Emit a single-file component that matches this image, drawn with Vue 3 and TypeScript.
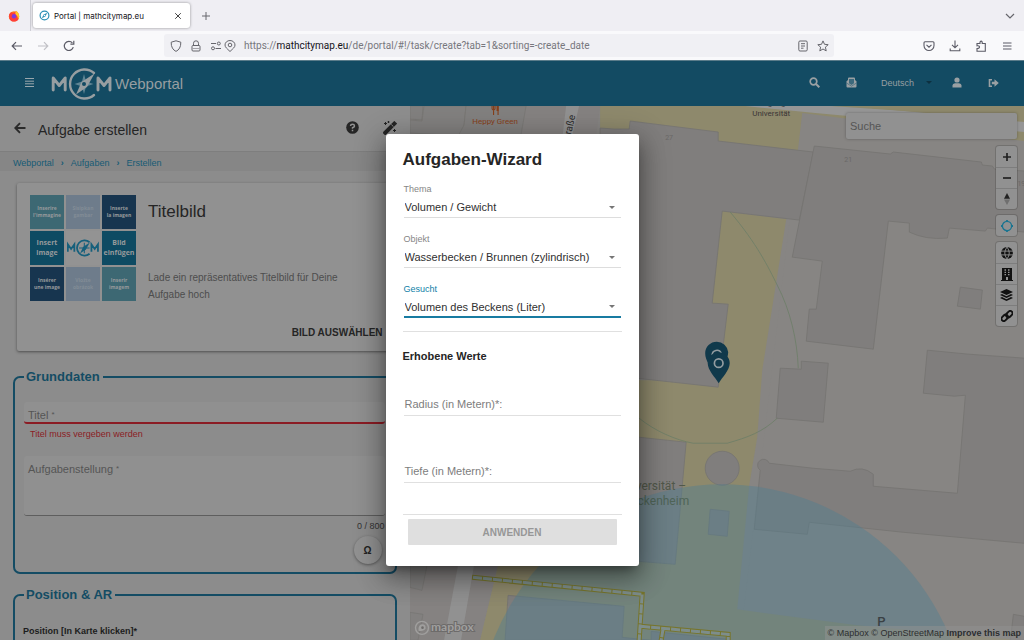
<script setup lang="ts">
import { ref } from 'vue'

interface WizardSelect {
  id: string
  label: string
  value: string
  active: boolean
}

const selects = ref<WizardSelect[]>([
  { id: 'thema', label: 'Thema', value: 'Volumen / Gewicht', active: false },
  { id: 'objekt', label: 'Objekt', value: 'Wasserbecken / Brunnen (zylindrisch)', active: false },
  { id: 'gesucht', label: 'Gesucht', value: 'Volumen des Beckens (Liter)', active: true },
])

const measures = [
  { id: 'radius', label: 'Radius (in Metern)*:' },
  { id: 'tiefe', label: 'Tiefe (in Metern)*:' },
]

const tiles = [
  { tone: 'sea', lines: ['Inserire', "l'immagine"] },
  { tone: 'pale', lines: ['Sisipkan', 'gambar'] },
  { tone: 'navy', lines: ['Inserte', 'la imagen'] },
  { tone: 'teal', lines: ['Insert', 'image'] },
  { tone: 'logo', lines: [] },
  { tone: 'teal', lines: ['Bild', 'einfügen'] },
  { tone: 'navy', lines: ['Insérer', 'une image'] },
  { tone: 'pale', lines: ['Vložte', 'obrázok'] },
  { tone: 'sea', lines: ['Inserir', 'imagem'] },
]

const crumbs = ['Webportal', 'Aufgaben', 'Erstellen']
const title = ref('')
const taskText = ref('')
const search = ref('')
</script>

<template>
  <div class="window">
    <div class="tabbar">
      <div class="ff">
        <svg viewBox="0 0 12 12" width="12" height="12" aria-hidden="true">
          <circle cx="6" cy="6.4" r="5.2" fill="#ff7a1a" />
          <path d="M1 5C2 3 3 2 4 2.4C5 3 7 3 8 1C11 3 12 7 10 10C7 12.500 3 12 1.500 9Z" fill="#ff3d3a" />
          <path d="M8 .8C11.500 3 12 7 10 9.500C10 7 9 5 7.500 4.500C7 3 7.500 2 8 .8Z" fill="#ffc928" />
          <circle cx="6" cy="6.200" r="2.200" fill="#7a3be0" />
        </svg>
      </div>
      <div class="tab">
        <svg viewBox="0 0 12 12" width="11" height="11" aria-hidden="true">
          <circle cx="6" cy="6" r="4.800" fill="none" stroke="#2a8fb5" stroke-width="1.300" />
          <path d="M9 3L7 7L3 9L5 5Z" fill="#2a8fb5" />
          <circle cx="6" cy="6" r=".9" fill="#fff" />
        </svg>
        <span class="tab-title">Portal | mathcitymap.eu</span>
        <button class="plain" aria-label="Tab schließen">
          <svg viewBox="0 0 8 8" width="8" height="8"><path d="M1.200 1.200L6.800 6.800M6.800 1.200L1.200 6.800" stroke="#444" stroke-width="1" /></svg>
        </button>
      </div>
      <button class="plain newtab" aria-label="Neuer Tab">
        <svg viewBox="0 0 10 10" width="10" height="10"><path d="M5 1V9M1 5H9" stroke="#66666c" stroke-width="1" /></svg>
      </button>
      <button class="plain tablist" aria-label="Tabs auflisten">
        <svg viewBox="0 0 10 6" width="10" height="6"><path d="M1 1L5 5L9 1" fill="none" stroke="#66666c" stroke-width="1.200" /></svg>
      </button>
    </div>

    <div class="toolbar">
      <div class="nav">
        <button class="plain" aria-label="Zurück">
          <svg viewBox="0 0 12 10" width="12" height="10"><path d="M11 5H1.500M5 1.200L1.200 5L5 8.800" fill="none" stroke="#5b5b66" stroke-width="1.200" /></svg>
        </button>
        <button class="plain faded" aria-label="Vor">
          <svg viewBox="0 0 12 10" width="12" height="10"><path d="M1 5H10.500M7 1.200L10.800 5L7 8.800" fill="none" stroke="#5b5b66" stroke-width="1.200" /></svg>
        </button>
        <button class="plain" aria-label="Neu laden">
          <svg viewBox="0 0 12 12" width="12" height="12"><path d="M10.300 7.200A4.600 4.600 0 1 1 9.400 2.900M10.800 .8V4.200H7.400" fill="none" stroke="#5b5b66" stroke-width="1.200" /></svg>
        </button>
      </div>
      <div class="urlbar">
        <svg viewBox="0 0 12 12" width="12" height="12" aria-hidden="true"><path d="M6 .8L10.800 2.200C11 7 9 10 6 11.400C3 10 1 7 1.200 2.200Z" fill="none" stroke="#66666c" stroke-width="1" stroke-linejoin="round" /></svg>
        <svg viewBox="0 0 12 12" width="12" height="12" aria-hidden="true"><rect x="2" y="5.500" width="8" height="5.500" rx="1" fill="none" stroke="#66666c" /><path d="M3.500 5.500V3.300A2.500 2.500 0 0 1 8.500 3.300V5.500" fill="none" stroke="#66666c" /><path d="M2 8.500H10" stroke="#a5a5aa" /></svg>
        <svg viewBox="0 0 12 12" width="12" height="12" aria-hidden="true"><path d="M1 3.500H6M5.500 8.500H11" stroke="#66666c" stroke-width="1.200" /><circle cx="8.800" cy="3.500" r="1.500" fill="none" stroke="#66666c" /><circle cx="3" cy="8.300" r="1.500" fill="none" stroke="#66666c" /></svg>
        <svg class="near" viewBox="0 0 12 12" width="12" height="12" aria-hidden="true"><path d="M6 11.500C3 8.500 1 7.300 1 5A5 4.500 0 0 1 11 5C11 7.300 9 8.500 6 11.500Z" fill="none" stroke="#66666c" /><circle cx="6" cy="5" r="1.800" fill="none" stroke="#66666c" /></svg>
        <span class="url">https://<b>mathcitymap.eu</b>/de/portal/#!/task/create?tab=1&amp;sorting=-create_date</span>
        <svg viewBox="0 0 12 12" width="12" height="12" aria-hidden="true"><rect x="1.800" y="1" width="8.400" height="10" rx="1.200" fill="none" stroke="#66666c" /><path d="M4 3.700H8M4 6H8M4 8.200H6.500" stroke="#66666c" /></svg>
        <svg viewBox="0 0 12 12" width="12" height="12" aria-hidden="true"><path d="M6 .9L7.500 4.300L11.200 4.700L8.400 7.100L9.200 10.900L6 9L2.800 10.900L3.600 7.100L.8 4.700L4.500 4.300Z" fill="none" stroke="#66666c" stroke-linejoin="round" /></svg>
      </div>
      <div class="tools">
        <svg viewBox="0 0 12 12" width="12" height="12" aria-hidden="true"><path d="M2 1.800H10Q11 1.800 11 2.800V5.500A5 5 0 0 1 1 5.500V2.800Q1 1.800 2 1.800ZM3.500 4.800L6 7.200L8.500 4.800" fill="none" stroke="#5b5b66" stroke-width="1.100" /></svg>
        <svg viewBox="0 0 12 12" width="12" height="12" aria-hidden="true"><path d="M6 .5V7.500M3 4.800L6 7.800L9 4.800M1.200 8.500V10.800H10.800V8.500" fill="none" stroke="#5b5b66" stroke-width="1.100" /></svg>
        <svg viewBox="0 0 12 12" width="12" height="12" aria-hidden="true"><path d="M2 11.200V8.500Q4.500 8.500 4.500 7T2 5.800V3.500H5V2Q6.200 .3 7.200 2V3.500H10.300V11.200Z" fill="none" stroke="#5b5b66" stroke-width="1.100" /></svg>
        <svg viewBox="0 0 12 12" width="12" height="12" aria-hidden="true"><path d="M2 3H10.500M2 6H10.500M2 9H10.500" stroke="#5b5b66" stroke-width="1.100" /></svg>
      </div>
    </div>

    <div class="page">
      <header class="appbar">
        <button class="plain burger" aria-label="Menü">
          <svg viewBox="0 0 9 9" width="9" height="9"><path d="M0 .5H9M0 3.200H9M0 5.800H9M0 8.500H9" stroke="#9aa7ad" stroke-width="1" /></svg>
        </button>
        <svg class="mark" viewBox="0 0 61 34" width="61" height="34" role="img" aria-label="MCM">
          <g fill="none" stroke="#979ea1" stroke-width="2.900" stroke-linejoin="round" stroke-linecap="round">
            <path d="M2.200 23V11L8.200 18.500L14.200 11V23M47 23V11L53 18.500L59 11V23" />
            <path d="M43 6A14.500 14.500 0 1 0 43 28" stroke-width="2.400" />
          </g>
          <path d="M33 7L35 14.500L42.500 17L35 19.500L33 27L31 19.500L23.500 17L31 14.500Z" fill="#5f8594" />
          <path d="M43.500 6.500L36 20L25 27.500L30.500 15Z" fill="#979ea1" />
          <circle cx="33" cy="17" r="2" fill="#134b63" />
        </svg>
        <span class="brand">Webportal</span>
        <nav class="actions">
          <button class="plain" aria-label="Suche öffnen"><svg viewBox="0 0 11 11" width="11" height="11"><circle cx="4.500" cy="4.500" r="3.300" fill="none" stroke="#9aa0a3" stroke-width="1.700" /><path d="M7 7L10.300 10.300" stroke="#9aa0a3" stroke-width="2" /></svg></button>
          <button class="plain" aria-label="Nachrichten"><svg viewBox="0 0 11 11" width="11" height="11"><path d="M.5 4.200L2 3V1.500Q2 .5 3 .5H8Q9 .5 9 1.500V3L10.500 4.200V9.500Q10.500 10.500 9.500 10.500H1.500Q.5 10.500 .5 9.500Z" fill="#9aa0a3" /><path d="M3 2H8V6.300L5.500 8L3 6.300Z" fill="#3d697c" /><path d="M.5 6L5.500 9.200L10.500 6" fill="none" stroke="#3d697c" stroke-width=".7" /></svg></button>
          <button class="plain lang">Deutsch <svg viewBox="0 0 6 3" width="6" height="3"><path d="M0 0H6L3 3Z" fill="#0d3040" /></svg></button>
          <button class="plain" aria-label="Profil"><svg viewBox="0 0 10 11" width="10" height="11"><circle cx="5" cy="3" r="2.600" fill="#9aa0a3" /><path d="M.5 10.500V8.500Q.5 6.500 3 6.300H7Q9.500 6.500 9.500 8.500V10.500Z" fill="#9aa0a3" /></svg></button>
          <button class="plain" aria-label="Abmelden"><svg viewBox="0 0 11 10" width="11" height="10"><path d="M4 1.700H1.500V8.300H4" fill="none" stroke="#9aa0a3" stroke-width="1.600" /><path d="M3.800 3.800H6.500V1.200L10.800 5L6.500 8.800V6.200H3.800Z" fill="#9aa0a3" /></svg></button>
        </nav>
      </header>

      <main class="content">
        <section class="panel">
          <div class="titlebar">
            <button class="plain" aria-label="Zurück zur Liste"><svg viewBox="0 0 12 12" width="12" height="12"><path d="M11.500 6H1.500M6 1.200L1.300 6L6 10.800" fill="none" stroke="#2a2a2a" stroke-width="1.900" /></svg></button>
            <h1>Aufgabe erstellen</h1>
            <button class="plain help" aria-label="Hilfe"><svg viewBox="0 0 13 13" width="13" height="13"><circle cx="6.500" cy="6.500" r="6.300" fill="#252525" /><path d="M4.500 5Q4.600 3.300 6.500 3.300T8.500 5Q8.500 6 6.500 6.800V7.700M6.500 8.700V10.200" fill="none" stroke="#929292" stroke-width="1.500" /></svg></button>
            <button class="plain" aria-label="Wizard"><svg viewBox="0 0 14 14" width="14" height="14"><path d="M2.300 11.700L11.300 2.700" stroke="#252525" stroke-width="4" stroke-linecap="square" /><path d="M8.300 3.500L10.500 5.700" stroke="#929292" stroke-width=".9" /><path d="M2.500 1V4M1 2.500H4M5.500 0V2M4.500 1H6.500M11.500 8V11M10 9.500H13" stroke="#252525" stroke-width="1" /></svg></button>
          </div>
          <nav class="crumbs" aria-label="Brotkrumen">
            <template v-for="(c, i) in crumbs" :key="c">
              <span v-if="i > 0" class="sep">›</span><a href="#">{{ c }}</a>
            </template>
          </nav>

          <div class="scroll">
            <article class="card">
              <div class="tiles">
                <div v-for="(t, i) in tiles" :key="i" class="tile" :class="[t.tone, { big: t.tone === 'teal' }]">
                  <svg v-if="t.tone === 'logo'" viewBox="0 0 61 34" width="32" height="18" role="img" aria-label="MCM">
                    <path d="M1.600 24V10L7.800 19L14 10V24M46.600 24V10L52.800 19L59 10V24M43 6A14.500 14.500 0 1 0 43 28" fill="none" stroke="#16607c" stroke-width="3.400" />
                    <path d="M43.500 6.500L36 20L25 27.500L30.500 15Z" fill="#16607c" />
                    <path d="M33 7V27M23 17H43" stroke="#16607c" stroke-width="2" />
                  </svg>
                  <span v-for="l in t.lines" :key="l">{{ l }}</span>
                </div>
              </div>
              <div class="card-text">
                <h2>Titelbild</h2>
                <p>Lade ein repräsentatives Titelbild für Deine Aufgabe hoch</p>
              </div>
              <button class="plain pick">BILD AUSWÄHLEN</button>
            </article>

            <fieldset class="group">
              <legend>Grunddaten</legend>
              <div class="field invalid">
                <label for="titel">Titel <sup>*</sup></label>
                <input id="titel" v-model="title" type="text" />
              </div>
              <p class="error">Titel muss vergeben werden</p>
              <div class="field area">
                <label for="aufgabe">Aufgabenstellung <sup>*</sup></label>
                <textarea id="aufgabe" v-model="taskText"></textarea>
              </div>
              <p class="count">{{ taskText.length }} / 800</p>
              <button class="omega" aria-label="Sonderzeichen">Ω</button>
            </fieldset>

            <fieldset class="group">
              <legend>Position &amp; AR</legend>
              <p class="pos">Position [In Karte klicken]*</p>
            </fieldset>
          </div>
        </section>

        <section class="map">
          <svg class="canvas" viewBox="410 106 614 534" preserveAspectRatio="xMinYMin slice" aria-hidden="true">
            <rect x="410" y="106" width="1400" height="900" fill="#878583" />
            <path d="M410 106H600L560 400L498 565L480 640H410Z" fill="#858281" />
            <g fill="#82807f" stroke="#777573" stroke-width=".7">
              <path d="M410 106H423L422 120L410 119Z" />
              <path d="M424 106H466L463 136L410 133V120L422 121Z" />
              <path d="M466 106H526L520 140H456L464 125Z" />
              <path d="M410 560H428L422 590L410 587Z" />
              <path d="M410 612L423 614L418 640H410Z" />
            </g>
            <path d="M566 106H579L571 140H562ZM458 565H474L461 640H444Z" fill="#919191" />
            <path d="M600 106H1024V142L802 114L799 152L718 142L600 140Z" fill="#8e896c" />
            <path d="M802 113L1024 141V640H740Z" fill="#878583" />
            <path d="M745 106H850L1024 122V132L815 113Z" fill="#969696" />
            <path d="M830 106H1024V121L920 112Z" fill="#8e896c" />
            <path d="M722 211L786 219L762 370L757 437L749 485L737 609L857 625L1024 640H480L498 565L600 380L700 380Z" fill="#8e896c" />
            <g fill="#807e7d" stroke="#757371" stroke-width=".8">
              <path d="M600 128L614 129L629 129L630 121L718 132L718 141L813 152L799 220L722 211L712 303L728 304L718 387L600 374Z" />
              <path d="M814 146L890 154L893 152L981 162L982 165L992 166L994 169L1024 171V232L987 228L985 231L949 228L947 238Q925 240 909 232L909 223L888 221L873 349L806 341L809 309L816 309L822 261L792 257Z" />
              <path d="M960 287L982 290L980 309L957 306Z" />
              <path d="M780 368L801 369V361L828 363L823 422L776 418Z" />
              <path d="M927 350L968 354L1024 358V543L969 538L903 532L809 522L807 534L754 529L760 470A6 6 0 1 1 769 463L813 468L850 471Q862 465 873 474L873 486L957 493L965 395L954 396L923 393Z" />
              <circle cx="722" cy="468" r="17" />
              <path d="M710 509L729 511L727 536L708 534Z" />
              <path d="M600 434L639 437L686 442L675 564L600 558Z" />
              <path d="M508 595L624 606L622 637L651 640H505Z" />
              <path d="M651 631L728 639V650H651ZM1013 614L1024 616V640H1010Z" />
            </g>
            <path d="M730 212C757 244 768 267 777 285C790 310 797 340 798 368M777 418C762 432 748 437 727 443H693C676 440 655 431 639 418" fill="none" stroke="#6c7d67" stroke-width=".8" />
            <circle cx="722" cy="730" r="246" fill="#527e90" fill-opacity=".45" />
            <g fill="none">
              <path d="M472 577L642 594L639 640M641 626L728 634V640M663 628L661 640" stroke="#77752c" stroke-width="5" />
              <path d="M473 577L642 594L639 640M641 626L728 634V640M663 628L661 640" stroke="#7d8d8b" stroke-width="3" stroke-dasharray="9 1" />
            </g>
            <path d="M716.500 341.500A11.500 11.500 0 0 1 728 352C728 360 720 369 717 374C710 367 705 360 705 353A11.500 11.500 0 0 1 716.500 341.500Z" fill="#10394b" />
            <path d="M712 355A4.700 4.700 0 0 1 721 353" fill="none" stroke="#929ca0" stroke-width="1.600" />
            <path d="M718.500 352A11 11 0 0 1 729.500 363C729.500 370 722 377 718.500 383C715 377 707.500 370 707.500 363A11 11 0 0 1 718.500 352Z" fill="#10394b" />
            <circle cx="718.500" cy="363" r="4.300" fill="none" stroke="#929ca0" stroke-width="1.700" />
            <path d="M492 106V108.500Q492 110 493.500 110T495 108.500V106M493.500 106V115M498 115V106" fill="none" stroke="#863f1a" stroke-width="1.100" />
            <path d="M496.500 106H498.500V111H496.500Z" fill="#863f1a" />
            <g class="map-text">
              <text x="495" y="124" fill="#863f1a" text-anchor="middle">Heppy Green</text>
              <text x="771" y="106" fill="#393536" text-anchor="middle">Eingang</text>
              <text x="771" y="116" fill="#393536" text-anchor="middle">Universität</text>
              <text transform="translate(571 135) rotate(-78)" fill="#2b2b2b" class="street">raße</text>
              <text x="686" y="490" text-anchor="end" fill="#51584a" class="place">Universität –</text>
              <text x="689" y="505" text-anchor="end" fill="#4f6457" class="place">Bockenheim</text>
              <text x="665" y="140" fill="#6a6867" class="num">27</text>
              <text x="844" y="162" fill="#6a6867" class="num">21</text>
              <text x="1017" y="186" fill="#6a6867" class="num">19</text>
              <text x="877" y="626" fill="#3a4144" class="parking">P</text>
            </g>
            <circle cx="422" cy="627.500" r="6.500" fill="none" stroke="#a09f9e" stroke-width="1.400" />
            <path d="M418.500 630.500Q418 624.500 422 624Q426 624 425.500 628Q424 631.500 418.500 630.500Z" fill="#a09f9e" />
            <circle cx="422.500" cy="627.300" r="1.300" fill="#6d6b6a" />
            <text x="431" y="631" class="mapbox">mapbox</text>
          </svg>

          <div class="map-ui">
            <input v-model="search" class="search" type="text" placeholder="Suche" aria-label="Suche" />
            <div class="ctrl">
              <button aria-label="Vergrößern"><svg viewBox="0 0 10 10" width="10" height="10"><path d="M5 1V9M1 5H9" stroke="#222" stroke-width="1.700" /></svg></button>
              <button aria-label="Verkleinern"><svg viewBox="0 0 10 10" width="10" height="10"><path d="M1 5H9" stroke="#222" stroke-width="1.700" /></svg></button>
              <button aria-label="Nach Norden"><svg viewBox="0 0 10 12" width="10" height="12"><path d="M2 5.700L5 0L8 5.700Z" fill="#222" /><path d="M2 6.500L5 12L8 6.500Z" fill="#6f6f6f" /></svg></button>
            </div>
            <div class="ctrl">
              <button aria-label="Standort"><svg viewBox="0 0 14 14" width="14" height="14"><circle cx="7" cy="7" r="4.600" fill="none" stroke="#1a7490" stroke-width="1.300" /><path d="M7 1V3M7 11V13M1 7H3M11 7H13" stroke="#1a7490" stroke-width="1.800" /></svg></button>
            </div>
            <div class="ctrl">
              <button aria-label="Satellit"><svg viewBox="0 0 12 12" width="12" height="12"><circle cx="6" cy="6" r="5.900" fill="#111" /><path d="M0 4.100H12M0 7.900H12M6 0Q1.500 6 6 12Q10.500 6 6 0" fill="none" stroke="#929292" stroke-width=".9" /></svg></button>
              <button aria-label="Gebäude"><svg viewBox="0 0 12 13" width="12" height="13"><path d="M1 0H11V12H12V13H0V12H1Z" fill="#111" /><path d="M3.500 2H5M7 2H8.500M3.500 4.300H5M7 4.300H8.500M3.500 6.600H5M7 6.600H8.500" stroke="#929292" stroke-width="1.300" /><path d="M5 9H7V12H5Z" fill="#929292" /></svg></button>
              <button aria-label="Ebenen"><svg viewBox="0 0 13 12" width="13" height="12"><path d="M6.500 0L13 3L6.500 6L0 3ZM0 6L2 5L6.500 7.200L11 5L13 6L6.500 9ZM0 9L2 8L6.500 10.200L11 8L13 9L6.500 12Z" fill="#111" /></svg></button>
              <button aria-label="Verknüpfung"><svg viewBox="0 0 12 12" width="12" height="12"><g fill="none" stroke="#111" stroke-width="1.900"><rect x="4.700" y="1.900" width="7.200" height="4.600" rx="2.300" transform="rotate(-45 8.300 4.200)" /><rect x=".1" y="5.500" width="7.200" height="4.600" rx="2.300" transform="rotate(-45 3.700 7.800)" /></g></svg></button>
            </div>
          </div>
          <footer class="attrib"><a href="#">© Mapbox</a> <a href="#">© OpenStreetMap</a> <a href="#" class="strong">Improve this map</a></footer>
        </section>
      </main>

      <div class="backdrop">
        <form class="dialog" role="dialog" aria-modal="true" aria-labelledby="wizard-title" @submit.prevent>
          <h2 id="wizard-title">Aufgaben-Wizard</h2>
          <div v-for="s in selects" :key="s.id" class="choice" :class="{ active: s.active }">
            <label :for="s.id">{{ s.label }}</label>
            <div class="select-box">
              <select :id="s.id" v-model="s.value"><option>{{ s.value }}</option></select>
              <svg viewBox="0 0 6 3" width="6" height="3" aria-hidden="true"><path d="M0 0H6L3 3Z" fill="#757575" /></svg>
            </div>
          </div>
          <hr />
          <h3>Erhobene Werte</h3>
          <div v-for="m in measures" :key="m.id" class="measure">
            <label :for="m.id">{{ m.label }}</label>
            <input :id="m.id" type="text" />
          </div>
          <hr class="end" />
          <button class="apply" type="submit" disabled>ANWENDEN</button>
        </form>
      </div>
    </div>
  </div>
</template>

<style>
body {
  margin: 0;
  overflow: hidden;
}
</style>

<style scoped>
* {
  box-sizing: border-box;
}
.window {
  height: 100vh;
  display: flex;
  flex-direction: column;
  font-family: "Liberation Sans", Arial, sans-serif;
  font-size: 11px;
  color: #252525;
}
h1, h2, h3, p {
  margin: 0;
}
svg {
  display: block;
  flex: none;
}
button, input, select, textarea {
  font-family: inherit;
  margin: 0;
}
.plain {
  border: 0;
  padding: 0;
  background: none;
  color: inherit;
}
a {
  text-decoration: none;
  color: inherit;
}

/* browser chrome */
.tabbar {
  height: 31px;
  flex: none;
  display: flex;
  align-items: center;
  background: #efeef3;
  font-family: Inter, Roboto, sans-serif;
}
.ff {
  width: 31px;
  height: 31px;
  padding-left: 8px;
  display: flex;
  align-items: center;
  border-right: 1px solid #cfcfd6;
}
.tab {
  width: 157px;
  height: 25px;
  margin-left: 2px;
  padding: 0 8px 0 6px;
  display: flex;
  align-items: center;
  gap: 4px;
  background: #fff;
  border-radius: 3px;
  box-shadow: 0 0 3px rgba(0, 0, 0, 0.4);
  font-size: 8px;
  color: #15141a;
}
.tab-title {
  flex: 1;
  white-space: nowrap;
}
.newtab {
  margin-left: 11px;
}
.tablist {
  margin-left: auto;
  margin-right: 9px;
}
.toolbar {
  height: 29px;
  flex: none;
  display: flex;
  align-items: center;
  background: #f9f9fb;
}
.nav {
  width: 164px;
  flex: none;
  padding-left: 11px;
  display: flex;
  align-items: center;
  gap: 14px;
}
.faded {
  opacity: 0.35;
}
.urlbar {
  flex: 1;
  height: 23px;
  padding: 0 5px 0 6px;
  display: flex;
  align-items: center;
  gap: 8px;
  background: #f0f0f4;
  border-radius: 3px;
  font-family: Roboto, sans-serif;
  font-size: 10px;
  color: #77777d;
}
.near {
  margin-left: -6px;
}
.url {
  flex: 1;
  white-space: nowrap;
}
.url b {
  font-weight: 400;
  color: #15141a;
}
.tools {
  width: 190px;
  flex: none;
  padding-right: 11px;
  display: flex;
  justify-content: flex-end;
  gap: 14px;
}

/* application */
.page {
  position: relative;
  flex: 1;
  min-height: 0;
  display: flex;
  flex-direction: column;
}
.appbar {
  height: 46px;
  flex: none;
  display: flex;
  align-items: center;
  background: #134b63;
  border-top: 1px solid #5b7c8a;
  color: #979ea1;
}
.burger {
  margin-left: 25px;
  padding-bottom: 2px;
}
.mark {
  margin-left: 17px;
}
.brand {
  margin-left: 3px;
  font-size: 15px;
}
.actions {
  margin-left: auto;
  margin-right: 25px;
  padding-bottom: 2px;
  display: flex;
  align-items: center;
  gap: 26px;
}
.actions .lang {
  display: flex;
  align-items: center;
  gap: 12px;
  margin-right: -6px;
  margin-left: -2px;
  font-size: 9px;
}
.content {
  flex: 1;
  min-height: 0;
  display: grid;
  grid-template-columns: 2fr 3fr;
}
.panel {
  min-width: 0;
  overflow: hidden;
  background: #8c8c8c;
}
.titlebar {
  height: 46px;
  padding: 0 13px 2px 14px;
  display: flex;
  align-items: center;
  background: #8e8e8e;
  border-bottom: 1px solid #7e7e7e;
}
.titlebar h1 {
  flex: 1;
  margin-left: 12px;
  padding-top: 4px;
  font-size: 14px;
  font-weight: 400;
}
.help {
  margin-right: 24px;
}
.crumbs {
  height: 19px;
  padding: 2px 13px 0 13px;
  display: flex;
  align-items: center;
  gap: 7px;
  background: #868686;
  font-size: 9px;
  color: #165b75;
}
.sep {
  font-weight: 700;
}
.scroll {
  padding: 12px 13px 0;
  display: flex;
  flex-direction: column;
}
.card {
  height: 168px;
  margin: 0 0 18px 4px;
  padding: 12px 14px 13px 13px;
  display: grid;
  grid-template-columns: 106px 1fr;
  grid-template-rows: 106px 1fr;
  column-gap: 12px;
  background: #919191;
  border-radius: 2px;
  box-shadow: 0 1px 3px rgba(0, 0, 0, 0.45);
}
.tiles {
  display: grid;
  grid-template-columns: repeat(3, 1fr);
  grid-template-rows: repeat(3, 1fr);
  gap: 2px;
}
.tile {
  display: flex;
  flex-direction: column;
  align-items: center;
  justify-content: center;
  font-family: "Open Sans", "Noto Sans", sans-serif;
  font-weight: 700;
  font-size: 5px;
  line-height: 7px;
  color: #979a9c;
  white-space: nowrap;
}
.big {
  font-size: 7px;
  line-height: 10px;
}
.sea {
  background: #3d6873;
}
.pale {
  background: #6e7c8b;
  color: #828c96;
}
.navy {
  background: #17354f;
}
.teal {
  background: #0e4b63;
}
.logo {
  background: #939393;
}
.card-text h2 {
  padding-top: 7px;
  font-size: 17px;
  line-height: 20px;
  font-weight: 400;
}
.card-text p {
  max-width: 220px;
  margin-top: 47px;
  font-size: 10px;
  line-height: 17px;
  color: #4d4d4d;
}
.pick {
  grid-column: 1 / -1;
  justify-self: end;
  align-self: end;
  font-size: 10px;
  font-weight: 700;
}
.group {
  min-width: 0;
  margin: 0 0 13px;
  padding: 17px 10px 8px 9px;
  border: 2px solid #144c64;
  border-radius: 7px;
}
.group legend {
  padding: 0 3px 0 2px;
  font-size: 13px;
  line-height: 16px;
  font-weight: 700;
  color: #144c64;
}
.field {
  display: grid;
}
.field label {
  grid-area: 1 / 1;
  z-index: 1;
  padding: 6px 4px 0;
  line-height: 14px;
  color: #555;
}
.field sup {
  font-size: 8px;
  line-height: 8px;
  vertical-align: 2px;
}
.field input, .field textarea {
  grid-area: 1 / 1;
  width: 100%;
  height: 22px;
  padding: 5px 4px;
  resize: none;
  border: 0;
  border-bottom: 2px solid #8b1c24;
  border-radius: 3px;
  outline: 0;
  background: #909090;
  font-size: 11px;
}
.field textarea {
  height: 60px;
  border-bottom: 1px solid #5e5e5e;
}
.error {
  padding: 3px 6px 0;
  font-size: 9px;
  line-height: 14px;
  color: #8b1c24;
}
.area {
  margin-top: 15px;
}
.count {
  margin-top: 4px;
  text-align: right;
  font-size: 9px;
  line-height: 12px;
  color: #333;
}
.omega {
  display: block;
  width: 28px;
  height: 28px;
  margin: 4px 3px 0 auto;
  padding: 0;
  border: 0;
  border-radius: 50%;
  background: #919191;
  box-shadow: 0 1px 3px rgba(0, 0, 0, 0.4);
  font-size: 10px;
  font-weight: 700;
  color: #222;
}
.pos {
  margin: 4px 0 0 -1px;
  font-size: 9px;
  line-height: 14px;
  font-weight: 700;
  color: #1d1d1d;
}

/* map */
.map {
  position: relative;
  min-width: 0;
  overflow: hidden;
  background: #878583;
}
.canvas {
  position: absolute;
  inset: 0;
  width: 100%;
  height: 100%;
}
.map-text {
  font-family: Roboto, sans-serif;
  font-size: 8px;
}
.street {
  font-size: 10px;
}
.place {
  font-size: 12px;
}
.num {
  font-size: 7px;
}
.parking {
  font-size: 13px;
  font-weight: 500;
}
.mapbox {
  font-family: Lato, sans-serif;
  font-size: 12px;
  font-weight: 700;
  fill: #a09f9e;
  stroke: #6d6b6a;
  stroke-width: 2px;
  paint-order: stroke;
}
.map-ui {
  position: absolute;
  top: 7px;
  right: 7px;
  display: flex;
  flex-direction: column;
  align-items: flex-end;
  gap: 6px;
}
.search {
  width: 171px;
  height: 26px;
  margin-bottom: 1px;
  padding: 0 4px;
  border: 0;
  border-radius: 2px;
  background: #919191;
  box-shadow: 0 0 3px rgba(0, 0, 0, 0.3);
  font-size: 11px;
}
.search::placeholder {
  color: #555;
  opacity: 1;
}
.ctrl {
  width: 21px;
  border-radius: 3px;
  background: #919191;
  box-shadow: 0 0 0 1px rgba(0, 0, 0, 0.15);
}
.ctrl button {
  width: 21px;
  height: 21px;
  padding: 0;
  display: grid;
  place-items: center;
  border: 0;
  background: none;
}
.ctrl button + button {
  border-top: 1px solid #7d7d7d;
}
.attrib {
  position: absolute;
  right: 0;
  bottom: 0;
  padding: 0 3px;
  background: rgba(145, 145, 145, 0.5);
  font-size: 9px;
  line-height: 14px;
  color: #2d2f30;
  white-space: nowrap;
}
.strong {
  font-weight: 700;
}

/* dialog */
.backdrop {
  position: absolute;
  inset: 0;
  display: flex;
  align-items: center;
  justify-content: center;
}
.dialog {
  width: 253px;
  padding: 16px 17px 21px;
  display: flex;
  flex-direction: column;
  background: #fff;
  border-radius: 3px;
  box-shadow: 0 7px 10px -5px rgba(0, 0, 0, 0.4), 0 12px 25px 2px rgba(0, 0, 0, 0.25), 0 6px 30px 5px rgba(0, 0, 0, 0.2);
}
.dialog h2 {
  margin-bottom: 11px;
  font-size: 17px;
  line-height: 20px;
}
.choice {
  height: 50px;
  padding: 2px 1px 0;
  color: #303030;
}
.choice label {
  display: block;
  font-size: 9px;
  line-height: 12px;
  color: #868686;
}
.choice.active label {
  color: #107fa8;
}
.select-box {
  display: flex;
  align-items: center;
  height: 23px;
  padding-right: 6px;
  border-bottom: 1px solid #ddd;
}
.active .select-box {
  border-bottom: 2px solid #187ba1;
}
.select-box svg {
  margin-top: 2px;
}
.select-box select {
  flex: 1;
  height: 21px;
  margin-top: 2px;
  padding: 0 1px;
  appearance: none;
  border: 0;
  outline: 0;
  background: none;
  font-size: 11px;
  color: #303030;
}
hr {
  width: 100%;
  margin: 0;
  border: 0;
  border-top: 1px solid #e0e0e0;
}
.dialog h3 {
  margin: 17px 0 22px;
  font-size: 11px;
  line-height: 14px;
}
.measure {
  display: grid;
  height: 67px;
  padding: 9px 1px 0;
}
.measure label {
  grid-area: 1 / 1;
  padding: 3px 1px 0;
  line-height: 14px;
  color: #7d7d7d;
}
.measure input {
  grid-area: 1 / 1;
  width: 100%;
  height: 22px;
  padding: 0 1px;
  border: 0;
  border-bottom: 1px solid #e0e0e0;
  outline: 0;
  background: none;
  font-size: 11px;
}
.dialog .end {
  margin-top: -5px;
}
.apply {
  height: 26px;
  margin: 4px 5px 0;
  border: 0;
  border-radius: 1px;
  background: #dfdfdf;
  font-size: 10px;
  font-weight: 700;
  color: #979797;
}
</style>
